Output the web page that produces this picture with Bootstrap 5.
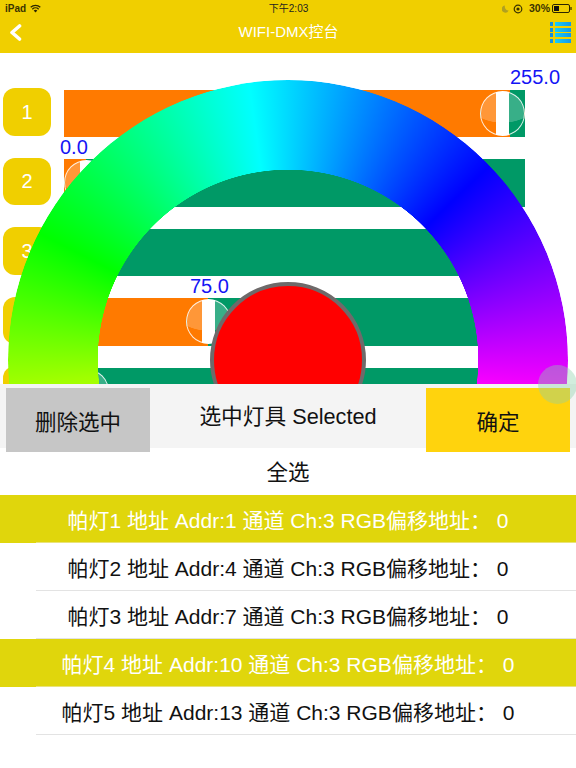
<!DOCTYPE html>
<html lang="zh">
<head>
<meta charset="utf-8">
<title>WIFI-DMX控台</title>
<link href="https://cdn.jsdelivr.net/npm/bootstrap@5.3.0/dist/css/bootstrap.min.css" rel="stylesheet">
<style>
html,body{height:768px;overflow:hidden}
body{width:576px;background:#fff;color:#111;font-family:"Liberation Sans","Noto Sans CJK SC",sans-serif;position:relative}
.top-head{background:#f0cf00;height:53px}
.status-line{height:17px;padding:0 4px 0 5px;font-size:10px;color:#3a3300;font-weight:700}
.status-mid{flex:1;text-align:center;font-weight:400;color:#222;padding-left:34px}
.status-pct{font-size:10.5px;margin:0 2px 0 6px}
.nav-line{height:36px;padding:0 5px 5px 9px;color:#fff}
.nav-name{font-size:15px;flex:1;text-align:center;padding-left:5px}
.stage{height:331px;padding-top:36.5px;position:relative;overflow:hidden;background:#fff}
.fader{height:47.5px;margin-bottom:22px;padding-left:3px;gap:13px}
.fader-num{width:48px;height:47.5px;margin-top:-1.5px;background:#f0cf00;color:#fff;border:0;border-radius:12px;font-size:20px;padding:0;flex:none}
.fader-bar{width:461px;height:47.5px;position:relative;flex:none}
.fader-val{position:absolute;top:-24.5px;font-size:20px;line-height:24px;color:#1414f5}
.fader-thumb{position:absolute;top:1px;width:45px;height:45px;border-radius:50%;border:1.5px solid rgba(255,255,255,.85);
 background:radial-gradient(ellipse 90% 66% at 50% 6%,rgba(255,255,255,.22) 98%,rgba(255,255,255,0) 100%),linear-gradient(90deg,#ff7a00 35%,#fff 35% 65%,#009966 65%)}
.hue-ring{position:absolute;left:8px;top:27px;width:560px;height:560px;border-radius:50%;
 background:conic-gradient(from 180deg,#f00 0deg,#ff0 50deg,#a0ff00 85deg,#0f0 117deg,#0ff 172deg,#00f 226deg,#f0f 278deg,#f00 360deg);
 -webkit-mask:radial-gradient(circle,transparent 190px,#000 190.5px);mask:radial-gradient(circle,transparent 190px,#000 190.5px)}
.hue-core{position:absolute;left:210px;top:229px;width:156px;height:156px;border-radius:50%;background:#f00;border:4px solid #6e6a6a}
.hue-handle{position:absolute;left:538px;top:365px;width:39px;height:39px;border-radius:50%;background:rgba(140,210,170,.4);z-index:5}
.sel-panel{height:64px;background:#f4f4f4;padding:4px 6px 0}
.sel-btn{width:144px;height:63.5px;border:0;border-radius:0;font-size:21.5px;color:#111;padding:6px 0 0;flex:none}
.sel-del{background:#c6c6c6}
.sel-ok{background:#ffd30d}
.sel-title{flex:1;text-align:center;font-size:21.7px;line-height:58px}
.all-line{height:47px;line-height:50px;text-align:center;font-size:21.5px}
.lamp-item{height:48px;line-height:51px;padding:0;border:0;border-radius:0;text-align:center;font-size:21px;color:#111;white-space:nowrap;
 background:linear-gradient(#e3e3e3,#e3e3e3) no-repeat 36px 100%/100% 1px #fff}
.lamp-on{color:#fff;background:linear-gradient(#e9e37a,#e9e37a) no-repeat 36px 100%/100% 1px #e0d60c}
</style>
</head>
<body>
<header class="top-head">
  <div class="status-line d-flex align-items-center">
    <span>iPad</span>
    <svg class="ms-1" width="11" height="9" viewBox="0 0 11 9"><path d="M5.5 8.6 3.7 6.6a2.6 2.6 0 0 1 3.6 0Z" fill="#2a2500"/><path d="M2.3 5.2a4.6 4.6 0 0 1 6.4 0M.7 3.3a7 7 0 0 1 9.6 0" fill="none" stroke="#2a2500" stroke-width="1.3"/></svg>
    <span class="status-mid">下午2:03</span>
    <svg width="7" height="8" viewBox="0 0 7 8"><path d="M3 .5a3.6 3.6 0 1 0 3.6 5A3.8 3.8 0 0 1 3 .5Z" fill="#b0a020"/></svg>
    <svg class="ms-1" width="10" height="10" viewBox="0 0 10 10"><circle cx="5" cy="5" r="3.8" fill="none" stroke="#3a3300" stroke-width="1.2"/><circle cx="5" cy="5" r="1.6" fill="#3a3300"/></svg>
    <span class="status-pct">30%</span>
    <svg width="20" height="9" viewBox="0 0 20 9"><rect x=".5" y=".5" width="17" height="8" rx="1.5" fill="none" stroke="#2a2500"/><rect x="2" y="2" width="5" height="5" fill="#111"/><rect x="18.4" y="3" width="1.2" height="3" fill="#2a2500"/></svg>
  </div>
  <nav class="nav-line d-flex align-items-center">
    <svg width="13" height="17" viewBox="0 0 13 17"><path d="M10.5 2 3 8.5l7.5 6.5" fill="none" stroke="#fff" stroke-width="3.6" stroke-linecap="round" stroke-linejoin="round"/></svg>
    <span class="nav-name">WIFI-DMX控台</span>
    <svg width="21" height="21" viewBox="0 0 21 21">
      <defs><linearGradient id="listBar"><stop offset="0" stop-color="#19cdf7"/><stop offset="1" stop-color="#1298ea"/></linearGradient></defs>
      <g fill="#1690e0"><rect y="0" width="3" height="4"/><rect y="6" width="3" height="4"/><rect y="11" width="3" height="4"/><rect y="17" width="3" height="4"/></g>
      <g fill="url(#listBar)"><rect x="5" y="0" width="16" height="4"/><rect x="5" y="6" width="16" height="4"/><rect x="5" y="11" width="16" height="4"/><rect x="5" y="17" width="16" height="4"/></g>
    </svg>
  </nav>
</header>

<main class="stage">
  <div class="fader d-flex align-items-start">
    <button class="btn fader-num" type="button">1</button>
    <div class="fader-bar" style="background:linear-gradient(90deg,#ff7a00 446px,#009966 446px)">
      <span class="fader-val" style="left:446px">255.0</span>
      <span class="fader-thumb" style="left:416px"></span>
    </div>
  </div>
  <div class="fader d-flex align-items-start">
    <button class="btn fader-num" type="button">2</button>
    <div class="fader-bar" style="background:linear-gradient(90deg,#ff7a00 22px,#009966 22px)">
      <span class="fader-val" style="left:-4px">0.0</span>
      <span class="fader-thumb" style="left:0"></span>
    </div>
  </div>
  <div class="fader d-flex align-items-start">
    <button class="btn fader-num" type="button">3</button>
    <div class="fader-bar" style="background:#009966"></div>
  </div>
  <div class="fader d-flex align-items-start">
    <button class="btn fader-num" type="button"></button>
    <div class="fader-bar" style="background:linear-gradient(90deg,#ff7a00 144px,#009966 144px)">
      <span class="fader-val" style="left:126px">75.0</span>
      <span class="fader-thumb" style="left:122px"></span>
    </div>
  </div>
  <div class="fader d-flex align-items-start">
    <button class="btn fader-num" type="button"></button>
    <div class="fader-bar" style="background:#009966">
      <span class="fader-thumb" style="left:0"></span>
    </div>
  </div>
  <div class="hue-ring"></div>
  <div class="hue-core"></div>
</main>
<div class="hue-handle"></div>

<section class="sel-panel d-flex align-items-start">
  <button class="btn sel-btn sel-del" type="button">删除选中</button>
  <div class="sel-title">选中灯具 Selected</div>
  <button class="btn sel-btn sel-ok" type="button">确定</button>
</section>
<div class="all-line">全选</div>
<ul class="list-group list-group-flush">
  <li class="list-group-item lamp-item lamp-on">帕灯1 地址 Addr:1 通道 Ch:3 RGB偏移地址： 0</li>
  <li class="list-group-item lamp-item">帕灯2 地址 Addr:4 通道 Ch:3 RGB偏移地址： 0</li>
  <li class="list-group-item lamp-item">帕灯3 地址 Addr:7 通道 Ch:3 RGB偏移地址： 0</li>
  <li class="list-group-item lamp-item lamp-on">帕灯4 地址 Addr:10 通道 Ch:3 RGB偏移地址： 0</li>
  <li class="list-group-item lamp-item">帕灯5 地址 Addr:13 通道 Ch:3 RGB偏移地址： 0</li>
</ul>
<script src="https://cdn.jsdelivr.net/npm/bootstrap@5.3.0/dist/js/bootstrap.bundle.min.js"></script>
</body>
</html>
